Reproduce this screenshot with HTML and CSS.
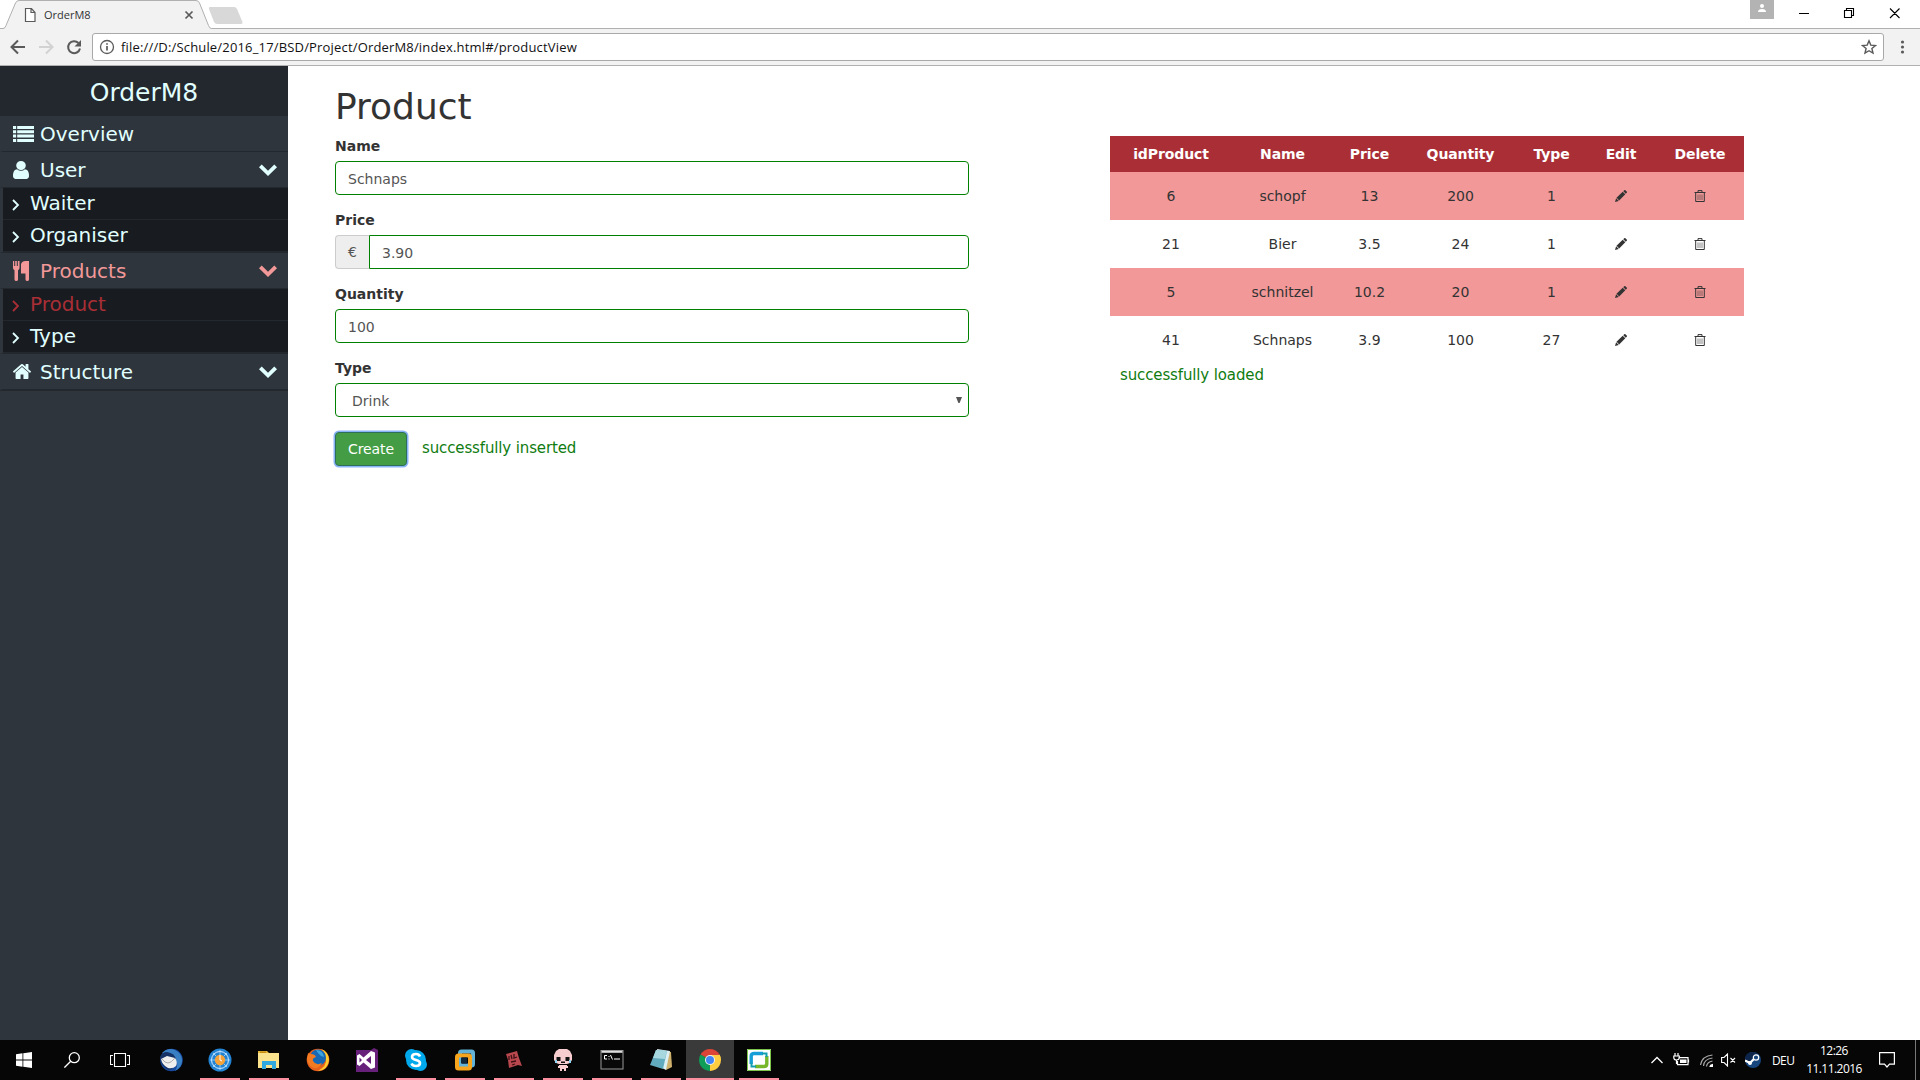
FILE: index.html
```html
<!DOCTYPE html>
<html lang="en">
<head>
<meta charset="utf-8">
<title>OrderM8</title>
<link rel="stylesheet" href="styles.css">
</head>
<body>
<svg class="defs" width="0" height="0">
  <symbol id="chev" viewBox="0 0 18 12"><path d="M0 3.2 2.7.5 9 6.7 15.3.5 18 3.2 9 12z"/></symbol>
  <symbol id="angle" viewBox="0 0 8 12"><path d="M1 1l5 5-5 5" fill="none" stroke="currentColor" stroke-width="1.8"/></symbol>
  <symbol id="pencil" viewBox="0 0 12 12"><path d="M8.300 1.200 9.200.3q.6-.6 1.200 0l1.300 1.300q.6.6 0 1.200l-.9.9zM7.700 1.800l2.600 2.500-6.100 6.100L1.500 7.800zM1.100 8.300l2.700 2.600L0 12z"/></symbol>
  <symbol id="trash" viewBox="0 0 12 12"><path d="M.5 2.500h11M4 2.400V.6h4v1.800M1.700 3v8.500h8.600V3" fill="none" stroke="currentColor" stroke-width="1"/><path d="M4 4.500v5.500M6 4.500v5.500M8 4.500v5.500" fill="none" stroke="currentColor" stroke-width=".8" opacity=".75"/></symbol>
</svg>
<div class="screen">
  <header class="tabs">
    <svg class="tabshape" width="260" height="29" viewBox="0 0 260 29">
      <path d="M0 28.500h3q2 0 3-3L15.500 3q1.200-2.500 3.500-2.500h177q2.300 0 3.500 2.500L208.500 25.500q1 3 3 3h48.500V29H0z" fill="#f2f2f2"/>
      <path d="M0 28.500h3q2 0 3-3L15.500 3q1.200-2.500 3.500-2.500h177q2.300 0 3.500 2.500L208.500 25.500q1 3 3 3h48.500" fill="none" stroke="#b0b0b0"/>
      <path d="M210 7h24q2 0 3 2l5.500 13q.6 2-1.500 2H217q-2 0-3-2L209 9q-.7-2 1-2z" fill="#d8d8d8"/>
      <path d="M25.500 8.500h6l3.500 4v9h-9.500zM31 8.500v4h4" fill="#fff" stroke="#5a5a5a" stroke-width="1.200"/>
      <path d="M185.500 11.500l7 7m0-7l-7 7" stroke="#5a5a5a" stroke-width="1.700"/>
    </svg>
    <span class="tabtitle">OrderM8</span>
    <svg class="winctl" width="180" height="28" viewBox="0 0 180 28">
      <rect x="10" width="24" height="19" fill="#b3b3b3"/><circle cx="22" cy="6" r="2" fill="#fff"/><path d="M18 12q0-3 4-3t4 3z" fill="#fff"/>
      <path d="M59 13.500h10M104.500 10.500h7v7h-7zM106.500 10.500v-2h7v7h-2M150 8.500l9.500 9.500m0-9.500L150 18" fill="none" stroke="#000" stroke-width="1.100"/>
    </svg>
  </header>
  <nav class="toolbar">
    <svg class="navbtns" width="92" height="36" viewBox="0 0 92 36" fill="none" stroke-width="2">
      <path d="M25 18H12m6-6.500L11.500 18l6.500 6.500" stroke="#5a5a5a"/>
      <path d="M39 18h13m-6-6.500 6.500 6.500-6.500 6.500" stroke="#d2d2d2"/>
      <path d="M78.500 14A6 6 0 1 0 80 19.500" stroke="#5a5a5a"/><path d="M81 11v6.500h-6.500z" fill="#5a5a5a"/>
    </svg>
    <div class="url">
      <svg width="16" height="16" viewBox="0 0 16 16"><circle cx="8" cy="8" r="6.500" fill="none" stroke="#5a5a5a" stroke-width="1.300"/><path d="M8 7v4.500M8 4.200v1.600" stroke="#5a5a5a" stroke-width="1.700"/></svg>
      <span>file:///D:/Schule/2016_17/BSD/Project/OrderM8/index.html#/productView</span>
      <svg class="star" width="16" height="16" viewBox="0 0 16 16"><path d="M8 1.800l1.800 4.300 4.700.4-3.600 3 1.100 4.600L8 11.700l-4 2.400 1.100-4.600-3.600-3 4.700-.4z" fill="none" stroke="#5a5a5a" stroke-width="1.400"/></svg>
    </div>
    <svg class="dots" width="36" height="36" viewBox="0 0 36 36" fill="#5a5a5a"><circle cx="18.500" cy="13" r="1.600"/><circle cx="18.500" cy="18" r="1.600"/><circle cx="18.500" cy="23" r="1.600"/></svg>
  </nav>
  <main class="page">
    <aside class="side">
      <div class="brand">OrderM8</div>
      <ul class="menu">
        <li class="item"><span class="ico"><svg width="21" height="16" viewBox="0 0 20 16" preserveAspectRatio="none"><path d="M0 0h3v3H0zM4 0h16v3H4zM0 4.300h3v3H0zM4 4.300h16v3H4zM0 8.600h3v3H0zM4 8.600h16v3H4zM0 13h3v3H0zM4 13h16v3H4z"/></svg></span>Overview</li>
        <li class="item"><span class="ico"><svg width="16" height="18" viewBox="256 128 1280 1536" preserveAspectRatio="none"><path d="M1536 1399q0 109-62.500 187t-150.500 78h-854q-88 0-150.500-78t-62.500-187q0-85 8.500-160.500t31.500-152 58.500-131 94-89 134.500-34.500q131 128 313 128t313-128q76 0 134.500 34.500t94 89 58.500 131 31.500 152 8.500 160.500zm-256-887q0 159-112.500 271.500t-271.500 112.500-271.500-112.500-112.500-271.500 112.500-271.500 271.500-112.500 271.500 112.500 112.500 271.500z"/></svg></span>User<svg class="chev"><use href="#chev"/></svg></li>
        <li><ul class="sub">
          <li><svg class="angle"><use href="#angle"/></svg>Waiter</li>
          <li><svg class="angle"><use href="#angle"/></svg>Organiser</li>
        </ul></li>
        <li class="item current"><span class="ico"><svg width="16" height="20" viewBox="0 0 16 20"><path d="M0 0h1.200v5h1V0h1.600v5h1V0H6.500v7q0 1.500-1.500 2.200V18.500q0 1.500-1.700 1.500T1.500 18.500V9.200Q0 8.500 0 7zM8 3.500Q8.500 0 12.500 0H16v18.500q0 1.500-1.700 1.500t-1.800-1.500V12.500H8z"/></svg></span>Products<svg class="chev"><use href="#chev"/></svg></li>
        <li><ul class="sub">
          <li class="active"><svg class="angle"><use href="#angle"/></svg>Product</li>
          <li><svg class="angle"><use href="#angle"/></svg>Type</li>
        </ul></li>
        <li class="item"><span class="ico"><svg width="18" height="15" viewBox="90 248 1612 1288" preserveAspectRatio="none"><path d="M1472 992v480q0 26-19 45t-45 19h-384v-384h-256v384h-384q-26 0-45-19t-19-45v-480q0-1 .5-3t.5-3l575-474 575 474q1 2 1 6zm223-69l-62 74q-8 9-21 11h-3q-13 0-21-7l-692-577-692 577q-12 8-24 7-13-2-21-11l-62-74q-8-10-7-23.500t11-21.500l719-599q32-26 76-26t76 26l244 204v-195q0-14 9-23t23-9h192q14 0 23 9t9 23v408l219 182q10 8 11 21.500t-7 23.500z"/></svg></span>Structure<svg class="chev"><use href="#chev"/></svg></li>
      </ul>
    </aside>
    <section class="content">
      <form class="form">
        <h1>Product</h1>
        <div class="group"><label>Name</label><div class="field">Schnaps</div></div>
        <div class="group"><label>Price</label><div class="withaddon"><span class="addon">€</span><div class="field">3.90</div></div></div>
        <div class="group"><label>Quantity</label><div class="field">100</div></div>
        <div class="group"><label>Type</label><div class="field select">Drink<svg width="6" height="6" viewBox="0 0 6 6"><path d="M0 0h6L3.600 6H2.400z" fill="#555"/></svg></div></div>
        <div class="actions"><span class="btn">Create</span><span class="msg">successfully inserted</span></div>
      </form>
      <div class="list">
        <table>
          <colgroup><col class="c1"><col class="c2"><col class="c3"><col class="c4"><col class="c5"><col class="c6"><col class="c7"></colgroup>
          <thead><tr><th>idProduct</th><th>Name</th><th>Price</th><th>Quantity</th><th>Type</th><th>Edit</th><th>Delete</th></tr></thead>
          <tbody>
            <tr><td>6</td><td>schopf</td><td>13</td><td>200</td><td>1</td><td><svg class="act"><use href="#pencil"/></svg></td><td><svg class="act"><use href="#trash"/></svg></td></tr>
            <tr><td>21</td><td>Bier</td><td>3.5</td><td>24</td><td>1</td><td><svg class="act"><use href="#pencil"/></svg></td><td><svg class="act"><use href="#trash"/></svg></td></tr>
            <tr><td>5</td><td>schnitzel</td><td>10.2</td><td>20</td><td>1</td><td><svg class="act"><use href="#pencil"/></svg></td><td><svg class="act"><use href="#trash"/></svg></td></tr>
            <tr><td>41</td><td>Schnaps</td><td>3.9</td><td>100</td><td>27</td><td><svg class="act"><use href="#pencil"/></svg></td><td><svg class="act"><use href="#trash"/></svg></td></tr>
          </tbody>
        </table>
        <div class="msg loaded">successfully loaded</div>
      </div>
    </section>
  </main>
  <footer class="taskbar">
    <div class="sys"><svg width="16" height="16" viewBox="0 0 16 16" fill="#fff"><path d="M0 2.300 6.500 1.300v6.300H0zM7.300 1.200 16 0v7.600H7.300zM0 8.400h6.500v6.300L0 13.700zM7.300 8.400H16V16l-8.700-1.200z"/></svg></div>
    <div class="sys"><svg width="16" height="16" viewBox="0 0 16 16" fill="none" stroke="#fff" stroke-width="1.300"><circle cx="10.300" cy="5.700" r="5"/><path d="M6.700 9.300.4 15.600"/></svg></div>
    <div class="sys"><svg width="20" height="14" viewBox="0 0 20 14" fill="none" stroke="#fff" stroke-width="1.100"><path d="M4.500.5h11v13h-11zM3 2.500H.5v9H3M17 2.500h2.500v9H17"/></svg></div>
    <div class="apps">
      <div class="app"><svg width="24" height="24" viewBox="0 0 24 24"><circle cx="12.500" cy="12" r="11.300" fill="#17489b"/><path d="M3 5Q9-1 16 2q8 4 7 12-1 6-7 9 4-6 1-11T3 5z" fill="#387fc4"/><path d="M1 9q2-5 7-5 8 1 9 8-1 8-7 10-8-3-9-13z" fill="#143266"/><path d="M2 11 8 8l8 2q3 4 1 8-3 3-8 2-6-3-7-9z" fill="#eee"/><path d="M3 11q3 4 6 4t7-5" fill="none" stroke="#aaa"/></svg></div>
      <div class="app run"><svg width="24" height="24" viewBox="0 0 24 24"><circle cx="12" cy="12" r="11.500" fill="#2384d4"/><circle cx="12" cy="12" r="8.500" fill="none" stroke="#d6ecff"/><circle cx="12" cy="12" r="5.200" fill="#f5a238"/><path d="M12 2v5m0 10v5M2 12h5m10 0h5M5 5l3 3m8 8 3 3M19 5l-3 3m-8 8-3 3" stroke="#a8dcff" stroke-width=".8"/><path d="M12 7v5l2 1" stroke="#fff" fill="none"/></svg></div>
      <div class="app run"><svg width="24" height="24" viewBox="0 0 24 24"><path d="M1 3h9l2 2h10v15H1z" fill="#e8b73c"/><path d="M1 5h21v15H1z" fill="#fbe38d"/><path d="M3 3.500h6v1.500H3z" fill="#c98d0e"/><path d="M5 13h14v8h-4v-4H9v4H5z" fill="#30a9e0"/></svg></div>
      <div class="app"><svg width="24" height="24" viewBox="0 0 24 24"><circle cx="12" cy="12" r="11.300" fill="#e6601c"/><path d="M15 1q8 3 8 11-1 10-11 11 9-5 8-12T15 1z" fill="#ffcb2d"/><circle cx="12" cy="9.500" r="8" fill="#1668b5"/><path d="M10 2q7 0 8 7-4-1-6-4z" fill="#3ca5df"/><path d="M2 5q1 1 3 1 4 0 5 3-4 1-3 4 3 5 9 2-3 6-8 5-6-2-7-9z" fill="#f27a20"/></svg></div>
      <div class="app"><svg width="24" height="24" viewBox="0 0 24 24"><path d="M1 2h15l3-2 4 2v22H1z" fill="#68217a"/><path d="M16 3l4 1.500v15L16 21 8.500 14.500 4.500 18 2 16.500v-9L4.500 6l4 3.500zM4.500 9.500v5L7 12zM16 8l-5 4 5 4z" fill="#fff" fill-rule="evenodd"/></svg></div>
      <div class="app run"><svg width="24" height="24" viewBox="0 0 24 24"><circle cx="7.500" cy="7.500" r="6.500" fill="#00a8ec"/><circle cx="16.500" cy="16.500" r="6.500" fill="#00a8ec"/><circle cx="12" cy="12" r="10" fill="#00a8ec"/><path d="M16 8.500Q15 6 12 6 8 6 8 9q0 2 4 3t4 3q0 3-4 3-3.500 0-4.500-2.500" fill="none" stroke="#fff" stroke-width="2.600"/></svg></div>
      <div class="app run"><svg width="24" height="24" viewBox="0 0 24 24" fill="none" stroke-width="4"><rect x="7" y="3.500" width="13" height="14" rx="1.500" stroke="#63b2d8"/><rect x="4" y="7.500" width="13" height="13" rx="1.500" stroke="#f7a51c"/><path d="M8 9.500h6v6H8z" fill="#10283a" stroke="none"/></svg></div>
      <div class="app run"><svg width="24" height="24" viewBox="0 0 24 24"><path d="M4 6l11-3 2 7 3 8-4-1-9 3-1-8z" fill="#b9484e"/><path d="M7 8v4m2-5 1 4m2-5v4l3-1M9 14l5-1m-4 4 3-1" stroke="#3d1114" stroke-width="1.300" fill="none"/></svg></div>
      <div class="app run"><svg width="24" height="24" viewBox="0 0 24 24"><path d="M8 1h8l3 2 2 4v5l-2 3-3 1H8l-3-1-2-3V7l2-4z" fill="#f7cdd0"/><path d="M8 17h8v1h1v2h-2v3h-2v-2h-2v2H9v-3H7v-2h1z" fill="#f7cdd0"/><path d="M5.500 9h4v4h-4zM14.500 9h4v4h-4zM10 13.500h4V15h-4z" fill="#111"/><path d="M4 12h2v3H4zM18 12h2v3h-2z" fill="#8dd4f0"/></svg></div>
      <div class="app run"><svg width="24" height="24" viewBox="0 0 24 24"><rect x="1" y="2.500" width="22" height="18.500" fill="#080808" stroke="#999"/><path d="M1.500 3h21v1.800h-21z" fill="#ddd"/><path d="M7 7.500H4.500v3.500H7M9 8v1m0 1.500v1M10.500 7l2 4.500M14 11h6" stroke="#fff" fill="none"/></svg></div>
      <div class="app run"><svg width="24" height="24" viewBox="0 0 24 24"><path d="M8 2l14 2 1 15-6 3z" fill="#cfb06c"/><path d="M8 1l13 2-4 19-6-3z" fill="#dceff2"/><path d="M7 2l11 1-4 18L1 17z" fill="#62aabd"/><path d="M7 2l11 1-2 8-12-1z" fill="#a7d8df"/></svg></div>
      <div class="app run on"><svg width="24" height="24" viewBox="0 0 24 24"><path d="M12 12 2.500 6.500A11 11 0 0 1 21.500 6.500z" fill="#db4437"/><path d="M12 12 21.500 6.500A11 11 0 0 1 12 23z" fill="#ffcd40"/><path d="M12 12v11A11 11 0 0 1 2.500 6.500z" fill="#0f9d58"/><path d="M12 7h9.800q.7 2 1.100 5L16 15z" fill="#ffcd40"/><circle cx="12" cy="12" r="5" fill="#f1f1f1"/><circle cx="12" cy="12" r="4" fill="#4285f4"/></svg></div>
      <div class="app run"><svg width="24" height="24" viewBox="0 0 24 24"><path d="M0 1h24v22H0z" fill="#fff"/><path d="M.5 1.500h23v21H.5z" fill="none" stroke="#7cc34a"/><path d="M4.200 16V8q0-2.500 3-2.500H16" fill="none" stroke="#159fd6" stroke-width="3.400"/><path d="M19.800 8v8q0 2.500-3 2.500H8" fill="none" stroke="#76b82a" stroke-width="3.400"/><path d="M15 5.500h4.500V9M4.500 15v3.500H9" fill="none" stroke="#139fae" stroke-width="2"/></svg></div>
    </div>
    <div class="tray">
      <svg width="12" height="8" viewBox="0 0 12 8" fill="none" stroke="#fff" stroke-width="1.300"><path d="M.5 7 6 1.500 11.500 7"/></svg>
      <svg class="bat" width="17" height="14" viewBox="0 0 17 14" fill="none" stroke="#fff" stroke-width="1.200"><path d="M5.500 4.600H15v7H4.500V8M15.500 6.500v3M2 0v2.500M5 0v2.500M.8 3h5.500v2Q6 7 3.500 7 1 7 .8 5zM3.500 7v4"/><path d="M7 6.500h6.500v3.500H7z" fill="#fff" stroke="none"/></svg>
      <svg class="wifi" width="13" height="13" viewBox="0 0 13 13" fill="none" stroke="#aaa" stroke-width="1.200"><path d="M.5 11Q2 2 12.500 1M3.500 12Q4 5 12.500 4M6.500 12.500Q7 8 12.500 7"/><path d="M10 12.500q.2-1.800 2.500-2v2z" fill="#fff" stroke="#fff"/></svg>
      <svg class="vol" width="15" height="14" viewBox="0 0 15 14" fill="none" stroke="#fff" stroke-width="1.100"><path d="M.6 4.500H3L6.500 1v12L3 9.500H.6zM9.500 5l4.500 4.500m0-4.500L9.500 9.500"/></svg>
      <svg class="steam" width="16" height="16" viewBox="0 0 16 16"><circle cx="8" cy="8" r="8" fill="#17457d"/><path d="M0 8q0-8 8-8 3 0 5 2L2 11z" fill="#0d254b"/><path d="M0 8.500 5 11l5-5" stroke="#fff" stroke-width="2.200" fill="none"/><circle cx="11" cy="5.500" r="2.700" fill="#17457d" stroke="#fff" stroke-width="1.200"/><circle cx="5" cy="11" r="2" fill="#fff"/></svg>
      <span class="lang">DEU</span>
      <div class="clock"><span>12:26</span><span>11.11.2016</span></div>
      <svg class="note" width="16" height="16" viewBox="0 0 16 16" fill="none" stroke="#fff" stroke-width="1.200"><path d="M.6.6h14.800v11.600H10.500L8 15l-2.500-2.800H.6z"/></svg>
    </div>
  </footer>
</div>
</body>
</html>
```
FILE: styles.css
```css
* { box-sizing: border-box; }
body { margin: 0; overflow: hidden; background: #fff; font-family: "DejaVu Sans", Verdana, sans-serif; font-size: 14px; color: #333; }
ul { list-style: none; margin: 0; padding: 0; }
.defs { position: absolute; }
.screen { width: 1920px; height: 1080px; display: flex; flex-direction: column; }
svg { display: block; flex: none; }

/* browser window */
.tabs { height: 29px; display: flex; flex: none; font-family: "Open Sans", sans-serif; background: linear-gradient(#b0b0b0, #b0b0b0) bottom / 100% 1px no-repeat #fff; }
.tabtitle { margin-left: -216px; font-size: 11px; line-height: 29px; letter-spacing: 0; color: #333; }
.winctl { margin-left: auto; }
.toolbar { height: 37px; flex: none; display: flex; background: #f2f2f2; border-bottom: 1px solid #b0b0b0; }
.url { flex: 1; height: 28px; margin-top: 4px; padding: 0 6px; display: flex; align-items: center; border: 1px solid #a9a9a9; border-radius: 3px; background: #fff; font-family: "Open Sans", sans-serif; font-size: 13px; color: #111; white-space: nowrap; }
.url span { margin-left: 6px; letter-spacing: 0.17px; }
.star { margin-left: auto; }

/* sidebar */
.page { flex: 1; display: flex; min-height: 0; }
.side { width: 288px; flex: none; background: #2e353d; color: #e1ffff; font-size: 20px; }
.brand { height: 50px; padding-top: 2px; line-height: 50px; text-align: center; font-size: 25px; background: #23282e; }
.item { height: 36px; display: flex; align-items: center; padding: 0 11px 0 10px; border-left: 3px solid #2e353d; border-bottom: 1px solid #23282e; }
.ico { width: 27px; fill: currentColor; }
.chev { width: 18px; height: 12px; margin-left: auto; fill: currentColor; }
.current { color: #f29898; }
.menu { border-bottom: 1px solid #23282e; }
.sub { border-left: 3px solid #2e353d; border-bottom: 1px solid #23282e; }
.sub li { height: 32px; padding: 0 10px 2px 9px; display: flex; align-items: center; background: #181c20; border-bottom: 1px solid #23282e; }
.sub .active { color: #a92e36; }
.angle { width: 8px; height: 12px; margin: 5px 10px 0 0; }

/* content */
.content { flex: 1; display: flex; padding: 0 0 0 47px; gap: 141px; }
.form { width: 634px; }
h1 { margin: 21px 0 0; font-size: 36px; font-weight: 400; line-height: 40px; }
.group { height: 74px; }
.form .group:first-of-type { margin-top: 9px; }
label { display: block; font-weight: 700; line-height: 20px; margin-bottom: 5px; }
.field { height: 34px; padding: 1px 12px 0; display: flex; align-items: center; border: 1px solid #008000; border-radius: 4px; color: #555; flex: 1; }
.withaddon { display: flex; }
.withaddon .field { border-radius: 0 4px 4px 0; }
.addon { width: 34px; display: flex; align-items: center; justify-content: center; border: 1px solid #ccc; border-right: 0; border-radius: 4px 0 0 4px; background: #eee; color: #555; }
.select { padding: 1px 6px 0 16px; justify-content: space-between; }
.select svg { margin-top: -2px; }
.actions { display: flex; align-items: center; }
.btn { width: 72px; height: 34px; line-height: 33px; text-align: center; color: #fff; background: #449d44; border: 1px solid #2f6f5a; border-radius: 4px; box-shadow: 0 0 0 1.500px #8ab4f8; letter-spacing: -0.1px; }
.msg { color: #107c10; font-size: 15px; letter-spacing: -0.13px; }
.actions .msg { margin-left: 15px; margin-top: -3px; }
.list { width: 634px; padding-top: 70px; }
table { width: 634px; table-layout: fixed; border-collapse: collapse; text-align: center; }
.c1 { width: 122px; } .c2 { width: 101px; } .c3 { width: 73px; } .c4 { width: 109px; } .c5 { width: 73px; } .c6 { width: 66px; } .c7 { width: 90px; }
th, td { padding: 0; }
th { height: 36px; background: #a92e36; color: #fff; letter-spacing: -0.1px; }
th:last-child, td:last-child { padding-left: 2px; }
td { height: 48px; }
tbody tr:nth-child(odd) { background: #f29898; }
.act { width: 12px; height: 12px; margin: 0 auto; fill: currentColor; }
.loaded { margin: 1px 0 0 10px; line-height: 21px; }

/* taskbar */
.taskbar { height: 40px; flex: none; display: flex; background: #060606; color: #fff; font-family: "Open Sans", sans-serif; font-size: 12px; }
.sys { width: 48px; display: flex; align-items: center; justify-content: center; }
.apps { display: flex; gap: 1px; margin-left: 3px; }
.app { width: 48px; display: flex; align-items: center; justify-content: center; }
.run { background: linear-gradient(#fb8f9f, #fb8f9f) bottom / 40px 2px no-repeat; }
.on { background: linear-gradient(#fb8f9f, #fb8f9f) bottom / 48px 2px no-repeat #3a3a3a; }
.tray { margin-left: auto; width: 269px; display: flex; align-items: center; border-right: 1px solid #777; margin-right: 4px; padding-left: 4px; }
.bat { margin-left: 10px; }
.wifi { margin-left: 10px; }
.vol { margin-left: 8px; }
.steam { margin-left: 9px; }
.lang { width: 24px; margin-left: 11px; letter-spacing: -0.6px; }
.clock { width: 66px; margin-left: 5px; display: flex; flex-direction: column; text-align: center; line-height: 18px; letter-spacing: -0.55px; }
.note { margin-left: 12px; }
```
